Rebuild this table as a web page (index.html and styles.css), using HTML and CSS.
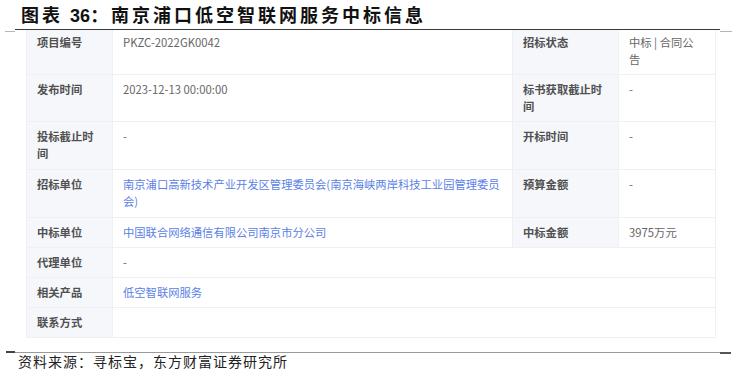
FILE: index.html
```html
<!DOCTYPE html>
<html lang="zh-CN">
<head>
<meta charset="utf-8">
<title>图表 36：南京浦口低空智联网服务中标信息</title>
<link rel="stylesheet" href="styles.css">
</head>
<body>
<div class="page">
  <h1 class="title">图表 <span class="num">36</span>：南京浦口低空智联网服务中标信息</h1>
  <div class="rule rule-top"><span class="dash dash-l"></span><span class="line"></span><span class="dash dash-r"></span></div>
  <table class="info">
    <colgroup>
      <col class="c-label1"><col class="c-value1"><col class="c-label2"><col class="c-value2">
    </colgroup>
    <tbody>
      <tr class="first">
        <th>项目编号</th><td>PKZC-2022GK0042</td>
        <th>招标状态</th><td class="narrow">中标 | 合同公告</td>
      </tr>
      <tr>
        <th>发布时间</th><td>2023-12-13 00:00:00</td>
        <th>标书获取截止时间</th><td>-</td>
      </tr>
      <tr class="tall">
        <th>投标截止时间</th><td>-</td>
        <th>开标时间</th><td>-</td>
      </tr>
      <tr class="tall">
        <th>招标单位</th><td class="link">南京浦口高新技术产业开发区管理委员会(南京海峡两岸科技工业园管理委员会)</td>
        <th>预算金额</th><td>-</td>
      </tr>
      <tr>
        <th>中标单位</th><td class="link">中国联合网络通信有限公司南京市分公司</td>
        <th>中标金额</th><td>3975万元</td>
      </tr>
      <tr>
        <th>代理单位</th><td colspan="3">-</td>
      </tr>
      <tr>
        <th>相关产品</th><td colspan="3" class="link">低空智联网服务</td>
      </tr>
      <tr>
        <th>联系方式</th><td colspan="3"></td>
      </tr>
    </tbody>
  </table>
  <div class="rule rule-bottom"><span class="dash dash-l"></span><span class="line"></span><span class="dash dash-r"></span></div>
  <p class="source">资料来源：寻标宝，东方财富证券研究所</p>
</div>
</body>
</html>
```
FILE: styles.css
```css
html, body {
  margin: 0;
  padding: 0;
  background: #ffffff;
}
.page {
  width: 737px;
  height: 376px;
  overflow: hidden;
  font-family: "Noto Sans CJK SC", "Noto Sans", sans-serif;
}
.title {
  margin: 0;
  padding-left: 21px;
  height: 29px;
  line-height: 29px;
  font-size: 18px;
  font-weight: 700;
  letter-spacing: 3px;
  color: #111111;
  white-space: nowrap;
}
.title .num {
  font-family: "Liberation Sans", sans-serif;
  font-weight: 700;
  letter-spacing: 0;
}
.rule {
  display: flex;
  height: 1px;
  align-items: flex-start;
}
.rule .line {
  flex: 0 0 705px;
  height: 1px;
}
.rule .dash {
  height: 1px;
}
.rule-top .dash-l {
  margin-left: 5px;
  width: 10px;
  margin-top: 2px;
  background: #b5b5b5;
}
.rule-top .line {
  background: #3a3a3a;
}
.rule-top .dash-r {
  width: 12px;
  margin-top: 2px;
  background: #b5b5b5;
}
.rule-bottom {
  margin-top: 14px;
}
.rule-bottom .dash-l {
  margin-left: 6px;
  width: 9px;
  height: 2px;
  margin-top: -1px;
  background: #444444;
}
.rule-bottom .line {
  background: #9a9a9a;
}
.rule-bottom .dash-r {
  width: 11px;
  height: 2px;
  background: #555555;
}
.info {
  margin-left: 26px;
  width: 689px;
  table-layout: fixed;
  border-collapse: collapse;
  font-size: 11.3px;
  line-height: 17px;
}
.c-label1 { width: 86px; }
.c-value1 { width: 400px; }
.c-label2 { width: 106px; }
.c-value2 { width: 97px; }
.info th,
.info td {
  border: 1px solid #eef0f5;
  padding: 6px 10px 6px 10px;
  vertical-align: top;
  text-align: left;
}
.info tr.first th,
.info tr.first td {
  border-top: none;
  padding-top: 4px;
}
.info tr.tall th,
.info tr.tall td {
  padding-bottom: 7px;
}
.info th {
  background: #f5f7fb;
  color: #505050;
  font-weight: 700;
}
.info td {
  background: #ffffff;
  color: #666666;
  font-weight: 400;
}
.info td.narrow {
  padding-right: 12px;
}
.info td.link {
  color: #5b7fe6;
}
.source {
  margin: 0;
  padding-left: 18px;
  font-size: 14px;
  line-height: 16px;
  letter-spacing: 1px;
  color: #222222;
  white-space: nowrap;
}
```
